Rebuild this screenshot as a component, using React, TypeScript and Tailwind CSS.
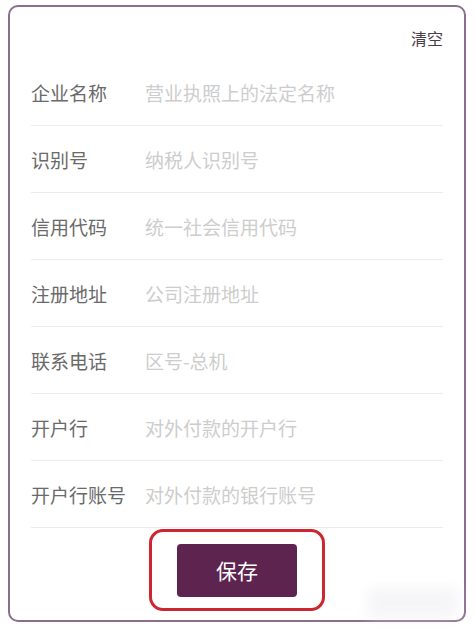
import React from "react";

const rows: [string, string][] = [
  ["企业名称", "营业执照上的法定名称"],
  ["识别号", "纳税人识别号"],
  ["信用代码", "统一社会信用代码"],
  ["注册地址", "公司注册地址"],
  ["联系电话", "区号-总机"],
  ["开户行", "对外付款的开户行"],
  ["开户行账号", "对外付款的银行账号"],
];

export default function App() {
  return (
    <div
      className="w-[476px] h-[629px] bg-white pt-[5px] pl-[8px]"
      style={{ fontFamily: '"Noto Sans CJK SC", "Noto Sans", sans-serif' }}
    >
      <div className="relative w-[458px] h-[617px] border-2 border-[#8a6e8e] rounded-[10px] bg-white px-[21px] flex flex-col">
        <div className="flex justify-end pt-[20px] mb-[10px]">
          <span className="text-[16px] leading-[22px] text-[#4a3c4a]">清空</span>
        </div>
        {rows.map(([label, ph]) => (
          <div
            key={label}
            className="h-[67px] flex items-center border-b border-[#ececec]"
          >
            <span className="w-[114px] shrink-0 text-[19px] leading-none text-[#6a6a6a] whitespace-nowrap">
              {label}
            </span>
            <span className="text-[19px] leading-none text-[#cdcdcd] whitespace-nowrap">
              {ph}
            </span>
          </div>
        ))}
        <div className="flex justify-center mt-[1px]">
          <div className="w-[176px] h-[82px] border-[3px] border-[#cc2730] rounded-[14px] flex items-center justify-center">
            <button className="w-[120px] h-[53px] rounded-[4px] bg-[#5e2450] text-white text-[21px] leading-none flex items-center justify-center">
              保存
            </button>
          </div>
        </div>
        <div className="absolute right-[6px] bottom-[2px] w-[90px] h-[30px] bg-[#f0eef2] blur-[6px] opacity-60 pointer-events-none" />
      </div>
    </div>
  );
}
